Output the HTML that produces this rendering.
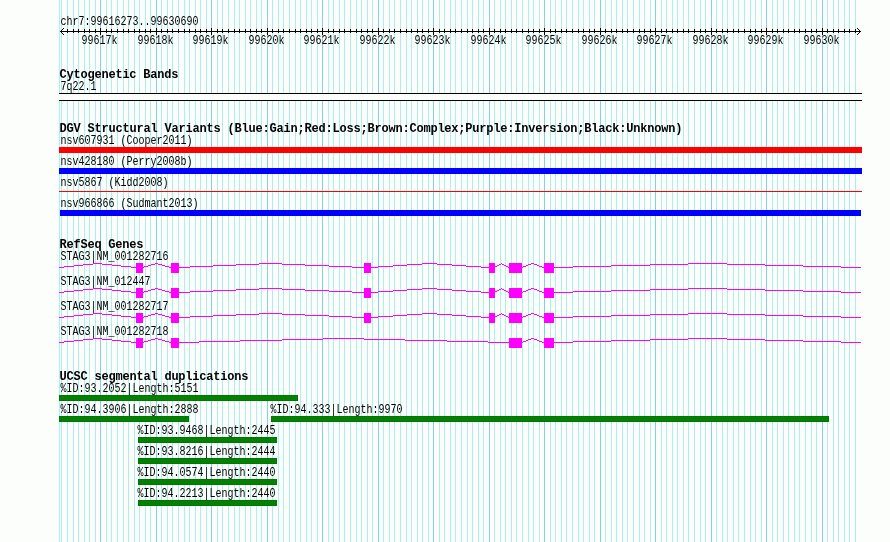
<!DOCTYPE html>
<html><head><meta charset="utf-8"><title>GBrowse</title>
<style>
html,body{margin:0;padding:0;background:#fcfefc;}
svg{display:block;will-change:transform;}
text{fill:#000;white-space:pre;}
.s{font-family:"Liberation Mono",monospace;font-size:10px;}
.b{font-family:"Liberation Mono",monospace;font-size:12px;font-weight:bold;}
</style></head><body>
<svg width="890" height="542" viewBox="0 0 890 542">
<g shape-rendering="crispEdges">
<rect x="0" y="0" width="890" height="542" fill="#fcfefc"/>
<rect x="59" y="0" width="1" height="542" fill="#afeeee"/>
<rect x="61" y="0" width="1" height="542" fill="#afeeee"/>
<rect x="67" y="0" width="1" height="542" fill="#afeeee"/>
<rect x="73" y="0" width="1" height="542" fill="#afeeee"/>
<rect x="78" y="0" width="1" height="542" fill="#afeeee"/>
<rect x="84" y="0" width="1" height="542" fill="#afeeee"/>
<rect x="89" y="0" width="1" height="542" fill="#afeeee"/>
<rect x="95" y="0" width="1" height="542" fill="#afeeee"/>
<rect x="100" y="0" width="1" height="542" fill="#87ceeb"/>
<rect x="106" y="0" width="1" height="542" fill="#afeeee"/>
<rect x="111" y="0" width="1" height="542" fill="#afeeee"/>
<rect x="117" y="0" width="1" height="542" fill="#afeeee"/>
<rect x="123" y="0" width="1" height="542" fill="#afeeee"/>
<rect x="128" y="0" width="1" height="542" fill="#afeeee"/>
<rect x="134" y="0" width="1" height="542" fill="#afeeee"/>
<rect x="139" y="0" width="1" height="542" fill="#afeeee"/>
<rect x="145" y="0" width="1" height="542" fill="#afeeee"/>
<rect x="150" y="0" width="1" height="542" fill="#afeeee"/>
<rect x="156" y="0" width="1" height="542" fill="#87ceeb"/>
<rect x="161" y="0" width="1" height="542" fill="#afeeee"/>
<rect x="167" y="0" width="1" height="542" fill="#afeeee"/>
<rect x="172" y="0" width="1" height="542" fill="#afeeee"/>
<rect x="178" y="0" width="1" height="542" fill="#afeeee"/>
<rect x="184" y="0" width="1" height="542" fill="#afeeee"/>
<rect x="189" y="0" width="1" height="542" fill="#afeeee"/>
<rect x="195" y="0" width="1" height="542" fill="#afeeee"/>
<rect x="200" y="0" width="1" height="542" fill="#afeeee"/>
<rect x="206" y="0" width="1" height="542" fill="#afeeee"/>
<rect x="211" y="0" width="1" height="542" fill="#87ceeb"/>
<rect x="217" y="0" width="1" height="542" fill="#afeeee"/>
<rect x="222" y="0" width="1" height="542" fill="#afeeee"/>
<rect x="228" y="0" width="1" height="542" fill="#afeeee"/>
<rect x="234" y="0" width="1" height="542" fill="#afeeee"/>
<rect x="239" y="0" width="1" height="542" fill="#afeeee"/>
<rect x="245" y="0" width="1" height="542" fill="#afeeee"/>
<rect x="250" y="0" width="1" height="542" fill="#afeeee"/>
<rect x="256" y="0" width="1" height="542" fill="#afeeee"/>
<rect x="261" y="0" width="1" height="542" fill="#afeeee"/>
<rect x="267" y="0" width="1" height="542" fill="#87ceeb"/>
<rect x="272" y="0" width="1" height="542" fill="#afeeee"/>
<rect x="278" y="0" width="1" height="542" fill="#afeeee"/>
<rect x="283" y="0" width="1" height="542" fill="#afeeee"/>
<rect x="289" y="0" width="1" height="542" fill="#afeeee"/>
<rect x="295" y="0" width="1" height="542" fill="#afeeee"/>
<rect x="300" y="0" width="1" height="542" fill="#afeeee"/>
<rect x="306" y="0" width="1" height="542" fill="#afeeee"/>
<rect x="311" y="0" width="1" height="542" fill="#afeeee"/>
<rect x="317" y="0" width="1" height="542" fill="#afeeee"/>
<rect x="322" y="0" width="1" height="542" fill="#87ceeb"/>
<rect x="328" y="0" width="1" height="542" fill="#afeeee"/>
<rect x="333" y="0" width="1" height="542" fill="#afeeee"/>
<rect x="339" y="0" width="1" height="542" fill="#afeeee"/>
<rect x="344" y="0" width="1" height="542" fill="#afeeee"/>
<rect x="350" y="0" width="1" height="542" fill="#afeeee"/>
<rect x="356" y="0" width="1" height="542" fill="#afeeee"/>
<rect x="361" y="0" width="1" height="542" fill="#afeeee"/>
<rect x="367" y="0" width="1" height="542" fill="#afeeee"/>
<rect x="372" y="0" width="1" height="542" fill="#afeeee"/>
<rect x="378" y="0" width="1" height="542" fill="#87ceeb"/>
<rect x="383" y="0" width="1" height="542" fill="#afeeee"/>
<rect x="389" y="0" width="1" height="542" fill="#afeeee"/>
<rect x="394" y="0" width="1" height="542" fill="#afeeee"/>
<rect x="400" y="0" width="1" height="542" fill="#afeeee"/>
<rect x="406" y="0" width="1" height="542" fill="#afeeee"/>
<rect x="411" y="0" width="1" height="542" fill="#afeeee"/>
<rect x="417" y="0" width="1" height="542" fill="#afeeee"/>
<rect x="422" y="0" width="1" height="542" fill="#afeeee"/>
<rect x="428" y="0" width="1" height="542" fill="#afeeee"/>
<rect x="433" y="0" width="1" height="542" fill="#87ceeb"/>
<rect x="439" y="0" width="1" height="542" fill="#afeeee"/>
<rect x="444" y="0" width="1" height="542" fill="#afeeee"/>
<rect x="450" y="0" width="1" height="542" fill="#afeeee"/>
<rect x="455" y="0" width="1" height="542" fill="#afeeee"/>
<rect x="461" y="0" width="1" height="542" fill="#afeeee"/>
<rect x="467" y="0" width="1" height="542" fill="#afeeee"/>
<rect x="472" y="0" width="1" height="542" fill="#afeeee"/>
<rect x="478" y="0" width="1" height="542" fill="#afeeee"/>
<rect x="483" y="0" width="1" height="542" fill="#afeeee"/>
<rect x="489" y="0" width="1" height="542" fill="#87ceeb"/>
<rect x="494" y="0" width="1" height="542" fill="#afeeee"/>
<rect x="500" y="0" width="1" height="542" fill="#afeeee"/>
<rect x="505" y="0" width="1" height="542" fill="#afeeee"/>
<rect x="511" y="0" width="1" height="542" fill="#afeeee"/>
<rect x="516" y="0" width="1" height="542" fill="#afeeee"/>
<rect x="522" y="0" width="1" height="542" fill="#afeeee"/>
<rect x="528" y="0" width="1" height="542" fill="#afeeee"/>
<rect x="533" y="0" width="1" height="542" fill="#afeeee"/>
<rect x="539" y="0" width="1" height="542" fill="#afeeee"/>
<rect x="544" y="0" width="1" height="542" fill="#87ceeb"/>
<rect x="550" y="0" width="1" height="542" fill="#afeeee"/>
<rect x="555" y="0" width="1" height="542" fill="#afeeee"/>
<rect x="561" y="0" width="1" height="542" fill="#afeeee"/>
<rect x="566" y="0" width="1" height="542" fill="#afeeee"/>
<rect x="572" y="0" width="1" height="542" fill="#afeeee"/>
<rect x="578" y="0" width="1" height="542" fill="#afeeee"/>
<rect x="583" y="0" width="1" height="542" fill="#afeeee"/>
<rect x="589" y="0" width="1" height="542" fill="#afeeee"/>
<rect x="594" y="0" width="1" height="542" fill="#afeeee"/>
<rect x="600" y="0" width="1" height="542" fill="#87ceeb"/>
<rect x="605" y="0" width="1" height="542" fill="#afeeee"/>
<rect x="611" y="0" width="1" height="542" fill="#afeeee"/>
<rect x="616" y="0" width="1" height="542" fill="#afeeee"/>
<rect x="622" y="0" width="1" height="542" fill="#afeeee"/>
<rect x="627" y="0" width="1" height="542" fill="#afeeee"/>
<rect x="633" y="0" width="1" height="542" fill="#afeeee"/>
<rect x="639" y="0" width="1" height="542" fill="#afeeee"/>
<rect x="644" y="0" width="1" height="542" fill="#afeeee"/>
<rect x="650" y="0" width="1" height="542" fill="#afeeee"/>
<rect x="655" y="0" width="1" height="542" fill="#87ceeb"/>
<rect x="661" y="0" width="1" height="542" fill="#afeeee"/>
<rect x="666" y="0" width="1" height="542" fill="#afeeee"/>
<rect x="672" y="0" width="1" height="542" fill="#afeeee"/>
<rect x="677" y="0" width="1" height="542" fill="#afeeee"/>
<rect x="683" y="0" width="1" height="542" fill="#afeeee"/>
<rect x="688" y="0" width="1" height="542" fill="#afeeee"/>
<rect x="694" y="0" width="1" height="542" fill="#afeeee"/>
<rect x="700" y="0" width="1" height="542" fill="#afeeee"/>
<rect x="705" y="0" width="1" height="542" fill="#afeeee"/>
<rect x="711" y="0" width="1" height="542" fill="#87ceeb"/>
<rect x="716" y="0" width="1" height="542" fill="#afeeee"/>
<rect x="722" y="0" width="1" height="542" fill="#afeeee"/>
<rect x="727" y="0" width="1" height="542" fill="#afeeee"/>
<rect x="733" y="0" width="1" height="542" fill="#afeeee"/>
<rect x="738" y="0" width="1" height="542" fill="#afeeee"/>
<rect x="744" y="0" width="1" height="542" fill="#afeeee"/>
<rect x="750" y="0" width="1" height="542" fill="#afeeee"/>
<rect x="755" y="0" width="1" height="542" fill="#afeeee"/>
<rect x="761" y="0" width="1" height="542" fill="#afeeee"/>
<rect x="766" y="0" width="1" height="542" fill="#87ceeb"/>
<rect x="772" y="0" width="1" height="542" fill="#afeeee"/>
<rect x="777" y="0" width="1" height="542" fill="#afeeee"/>
<rect x="783" y="0" width="1" height="542" fill="#afeeee"/>
<rect x="788" y="0" width="1" height="542" fill="#afeeee"/>
<rect x="794" y="0" width="1" height="542" fill="#afeeee"/>
<rect x="799" y="0" width="1" height="542" fill="#afeeee"/>
<rect x="805" y="0" width="1" height="542" fill="#afeeee"/>
<rect x="811" y="0" width="1" height="542" fill="#afeeee"/>
<rect x="816" y="0" width="1" height="542" fill="#afeeee"/>
<rect x="822" y="0" width="1" height="542" fill="#87ceeb"/>
<rect x="827" y="0" width="1" height="542" fill="#afeeee"/>
<rect x="833" y="0" width="1" height="542" fill="#afeeee"/>
<rect x="838" y="0" width="1" height="542" fill="#afeeee"/>
<rect x="844" y="0" width="1" height="542" fill="#afeeee"/>
<rect x="849" y="0" width="1" height="542" fill="#afeeee"/>
<rect x="855" y="0" width="1" height="542" fill="#afeeee"/>
<rect x="60" y="31" width="801" height="1" fill="#000"/>
<rect x="67" y="29" width="1" height="4" fill="#000"/>
<rect x="73" y="29" width="1" height="4" fill="#000"/>
<rect x="78" y="29" width="1" height="4" fill="#000"/>
<rect x="84" y="29" width="1" height="4" fill="#000"/>
<rect x="89" y="29" width="1" height="4" fill="#000"/>
<rect x="95" y="29" width="1" height="4" fill="#000"/>
<rect x="100" y="28" width="1" height="7" fill="#000"/>
<rect x="106" y="29" width="1" height="4" fill="#000"/>
<rect x="111" y="29" width="1" height="4" fill="#000"/>
<rect x="117" y="29" width="1" height="4" fill="#000"/>
<rect x="123" y="29" width="1" height="4" fill="#000"/>
<rect x="128" y="29" width="1" height="4" fill="#000"/>
<rect x="134" y="29" width="1" height="4" fill="#000"/>
<rect x="139" y="29" width="1" height="4" fill="#000"/>
<rect x="145" y="29" width="1" height="4" fill="#000"/>
<rect x="150" y="29" width="1" height="4" fill="#000"/>
<rect x="156" y="28" width="1" height="7" fill="#000"/>
<rect x="161" y="29" width="1" height="4" fill="#000"/>
<rect x="167" y="29" width="1" height="4" fill="#000"/>
<rect x="172" y="29" width="1" height="4" fill="#000"/>
<rect x="178" y="29" width="1" height="4" fill="#000"/>
<rect x="184" y="29" width="1" height="4" fill="#000"/>
<rect x="189" y="29" width="1" height="4" fill="#000"/>
<rect x="195" y="29" width="1" height="4" fill="#000"/>
<rect x="200" y="29" width="1" height="4" fill="#000"/>
<rect x="206" y="29" width="1" height="4" fill="#000"/>
<rect x="211" y="28" width="1" height="7" fill="#000"/>
<rect x="217" y="29" width="1" height="4" fill="#000"/>
<rect x="222" y="29" width="1" height="4" fill="#000"/>
<rect x="228" y="29" width="1" height="4" fill="#000"/>
<rect x="234" y="29" width="1" height="4" fill="#000"/>
<rect x="239" y="29" width="1" height="4" fill="#000"/>
<rect x="245" y="29" width="1" height="4" fill="#000"/>
<rect x="250" y="29" width="1" height="4" fill="#000"/>
<rect x="256" y="29" width="1" height="4" fill="#000"/>
<rect x="261" y="29" width="1" height="4" fill="#000"/>
<rect x="267" y="28" width="1" height="7" fill="#000"/>
<rect x="272" y="29" width="1" height="4" fill="#000"/>
<rect x="278" y="29" width="1" height="4" fill="#000"/>
<rect x="283" y="29" width="1" height="4" fill="#000"/>
<rect x="289" y="29" width="1" height="4" fill="#000"/>
<rect x="295" y="29" width="1" height="4" fill="#000"/>
<rect x="300" y="29" width="1" height="4" fill="#000"/>
<rect x="306" y="29" width="1" height="4" fill="#000"/>
<rect x="311" y="29" width="1" height="4" fill="#000"/>
<rect x="317" y="29" width="1" height="4" fill="#000"/>
<rect x="322" y="28" width="1" height="7" fill="#000"/>
<rect x="328" y="29" width="1" height="4" fill="#000"/>
<rect x="333" y="29" width="1" height="4" fill="#000"/>
<rect x="339" y="29" width="1" height="4" fill="#000"/>
<rect x="344" y="29" width="1" height="4" fill="#000"/>
<rect x="350" y="29" width="1" height="4" fill="#000"/>
<rect x="356" y="29" width="1" height="4" fill="#000"/>
<rect x="361" y="29" width="1" height="4" fill="#000"/>
<rect x="367" y="29" width="1" height="4" fill="#000"/>
<rect x="372" y="29" width="1" height="4" fill="#000"/>
<rect x="378" y="28" width="1" height="7" fill="#000"/>
<rect x="383" y="29" width="1" height="4" fill="#000"/>
<rect x="389" y="29" width="1" height="4" fill="#000"/>
<rect x="394" y="29" width="1" height="4" fill="#000"/>
<rect x="400" y="29" width="1" height="4" fill="#000"/>
<rect x="406" y="29" width="1" height="4" fill="#000"/>
<rect x="411" y="29" width="1" height="4" fill="#000"/>
<rect x="417" y="29" width="1" height="4" fill="#000"/>
<rect x="422" y="29" width="1" height="4" fill="#000"/>
<rect x="428" y="29" width="1" height="4" fill="#000"/>
<rect x="433" y="28" width="1" height="7" fill="#000"/>
<rect x="439" y="29" width="1" height="4" fill="#000"/>
<rect x="444" y="29" width="1" height="4" fill="#000"/>
<rect x="450" y="29" width="1" height="4" fill="#000"/>
<rect x="455" y="29" width="1" height="4" fill="#000"/>
<rect x="461" y="29" width="1" height="4" fill="#000"/>
<rect x="467" y="29" width="1" height="4" fill="#000"/>
<rect x="472" y="29" width="1" height="4" fill="#000"/>
<rect x="478" y="29" width="1" height="4" fill="#000"/>
<rect x="483" y="29" width="1" height="4" fill="#000"/>
<rect x="489" y="28" width="1" height="7" fill="#000"/>
<rect x="494" y="29" width="1" height="4" fill="#000"/>
<rect x="500" y="29" width="1" height="4" fill="#000"/>
<rect x="505" y="29" width="1" height="4" fill="#000"/>
<rect x="511" y="29" width="1" height="4" fill="#000"/>
<rect x="516" y="29" width="1" height="4" fill="#000"/>
<rect x="522" y="29" width="1" height="4" fill="#000"/>
<rect x="528" y="29" width="1" height="4" fill="#000"/>
<rect x="533" y="29" width="1" height="4" fill="#000"/>
<rect x="539" y="29" width="1" height="4" fill="#000"/>
<rect x="544" y="28" width="1" height="7" fill="#000"/>
<rect x="550" y="29" width="1" height="4" fill="#000"/>
<rect x="555" y="29" width="1" height="4" fill="#000"/>
<rect x="561" y="29" width="1" height="4" fill="#000"/>
<rect x="566" y="29" width="1" height="4" fill="#000"/>
<rect x="572" y="29" width="1" height="4" fill="#000"/>
<rect x="578" y="29" width="1" height="4" fill="#000"/>
<rect x="583" y="29" width="1" height="4" fill="#000"/>
<rect x="589" y="29" width="1" height="4" fill="#000"/>
<rect x="594" y="29" width="1" height="4" fill="#000"/>
<rect x="600" y="28" width="1" height="7" fill="#000"/>
<rect x="605" y="29" width="1" height="4" fill="#000"/>
<rect x="611" y="29" width="1" height="4" fill="#000"/>
<rect x="616" y="29" width="1" height="4" fill="#000"/>
<rect x="622" y="29" width="1" height="4" fill="#000"/>
<rect x="627" y="29" width="1" height="4" fill="#000"/>
<rect x="633" y="29" width="1" height="4" fill="#000"/>
<rect x="639" y="29" width="1" height="4" fill="#000"/>
<rect x="644" y="29" width="1" height="4" fill="#000"/>
<rect x="650" y="29" width="1" height="4" fill="#000"/>
<rect x="655" y="28" width="1" height="7" fill="#000"/>
<rect x="661" y="29" width="1" height="4" fill="#000"/>
<rect x="666" y="29" width="1" height="4" fill="#000"/>
<rect x="672" y="29" width="1" height="4" fill="#000"/>
<rect x="677" y="29" width="1" height="4" fill="#000"/>
<rect x="683" y="29" width="1" height="4" fill="#000"/>
<rect x="688" y="29" width="1" height="4" fill="#000"/>
<rect x="694" y="29" width="1" height="4" fill="#000"/>
<rect x="700" y="29" width="1" height="4" fill="#000"/>
<rect x="705" y="29" width="1" height="4" fill="#000"/>
<rect x="711" y="28" width="1" height="7" fill="#000"/>
<rect x="716" y="29" width="1" height="4" fill="#000"/>
<rect x="722" y="29" width="1" height="4" fill="#000"/>
<rect x="727" y="29" width="1" height="4" fill="#000"/>
<rect x="733" y="29" width="1" height="4" fill="#000"/>
<rect x="738" y="29" width="1" height="4" fill="#000"/>
<rect x="744" y="29" width="1" height="4" fill="#000"/>
<rect x="750" y="29" width="1" height="4" fill="#000"/>
<rect x="755" y="29" width="1" height="4" fill="#000"/>
<rect x="761" y="29" width="1" height="4" fill="#000"/>
<rect x="766" y="28" width="1" height="7" fill="#000"/>
<rect x="772" y="29" width="1" height="4" fill="#000"/>
<rect x="777" y="29" width="1" height="4" fill="#000"/>
<rect x="783" y="29" width="1" height="4" fill="#000"/>
<rect x="788" y="29" width="1" height="4" fill="#000"/>
<rect x="794" y="29" width="1" height="4" fill="#000"/>
<rect x="799" y="29" width="1" height="4" fill="#000"/>
<rect x="805" y="29" width="1" height="4" fill="#000"/>
<rect x="811" y="29" width="1" height="4" fill="#000"/>
<rect x="816" y="29" width="1" height="4" fill="#000"/>
<rect x="822" y="28" width="1" height="7" fill="#000"/>
<rect x="827" y="29" width="1" height="4" fill="#000"/>
<rect x="833" y="29" width="1" height="4" fill="#000"/>
<rect x="838" y="29" width="1" height="4" fill="#000"/>
<rect x="844" y="29" width="1" height="4" fill="#000"/>
<rect x="849" y="29" width="1" height="4" fill="#000"/>
<rect x="855" y="29" width="1" height="4" fill="#000"/>
<path d="M63 28h1v1h-1zM857 28h1v1h-1zM62 29h1v1h-1zM858 29h1v1h-1zM61 30h1v1h-1zM859 30h1v1h-1zM60 31h1v1h-1zM860 31h1v1h-1zM61 32h1v1h-1zM859 32h1v1h-1zM62 33h1v1h-1zM858 33h1v1h-1zM63 34h1v1h-1zM857 34h1v1h-1z" fill="#000"/>
<rect x="59" y="94" width="803" height="6" fill="#fcfefc"/>
<rect x="59" y="93" width="803" height="1" fill="#000"/>
<rect x="59" y="100" width="803" height="1" fill="#000"/>
<rect x="59" y="147" width="803" height="6" fill="#ff0000"/>
<rect x="59" y="168" width="803" height="6" fill="#0000ff"/>
<rect x="59" y="191" width="803" height="1" fill="#ff0000"/>
<rect x="60" y="210" width="801" height="6" fill="#0000ff"/>
<path d="M93 263h9v1h-9zM155 263h3v1h-3zM259 263h23v1h-23zM422 263h15v1h-15zM501 263h1v1h-1zM531 263h3v1h-3zM688 263h39v1h-39zM83 264h10v1h-10zM102 264h10v1h-10zM151 264h4v1h-4zM158 264h4v1h-4zM236 264h23v1h-23zM282 264h23v1h-23zM407 264h15v1h-15zM437 264h15v1h-15zM499 264h2v1h-2zM502 264h2v1h-2zM528 264h3v1h-3zM534 264h3v1h-3zM650 264h38v1h-38zM727 264h38v1h-38zM74 265h9v1h-9zM112 265h9v1h-9zM148 265h3v1h-3zM162 265h3v1h-3zM213 265h23v1h-23zM305 265h24v1h-24zM393 265h14v1h-14zM452 265h14v1h-14zM497 265h2v1h-2zM504 265h2v1h-2zM526 265h2v1h-2zM537 265h2v1h-2zM611 265h39v1h-39zM765 265h38v1h-38zM64 266h10v1h-10zM121 266h10v1h-10zM144 266h4v1h-4zM165 266h4v1h-4zM190 266h23v1h-23zM329 266h23v1h-23zM378 266h15v1h-15zM466 266h15v1h-15zM495 266h2v1h-2zM506 266h2v1h-2zM523 266h3v1h-3zM539 266h3v1h-3zM573 266h38v1h-38zM803 266h38v1h-38zM59 267h5v1h-5zM131 267h5v1h-5zM142 267h2v1h-2zM169 267h2v1h-2zM178 267h12v1h-12zM352 267h12v1h-12zM370 267h8v1h-8zM481 267h8v1h-8zM494 267h1v1h-1zM508 267h1v1h-1zM521 267h2v1h-2zM542 267h2v1h-2zM553 267h20v1h-20zM841 267h20v1h-20z" fill="#ff00ff"/>
<rect x="136" y="263" width="7" height="10" fill="#ff00ff"/>
<rect x="171" y="263" width="8" height="10" fill="#ff00ff"/>
<rect x="364" y="263" width="7" height="10" fill="#ff00ff"/>
<rect x="489" y="263" width="6" height="10" fill="#ff00ff"/>
<rect x="509" y="263" width="13" height="10" fill="#ff00ff"/>
<rect x="544" y="263" width="10" height="10" fill="#ff00ff"/>
<path d="M93 288h9v1h-9zM155 288h3v1h-3zM259 288h23v1h-23zM422 288h15v1h-15zM501 288h1v1h-1zM531 288h3v1h-3zM688 288h39v1h-39zM83 289h10v1h-10zM102 289h10v1h-10zM151 289h4v1h-4zM158 289h4v1h-4zM236 289h23v1h-23zM282 289h23v1h-23zM407 289h15v1h-15zM437 289h15v1h-15zM499 289h2v1h-2zM502 289h2v1h-2zM528 289h3v1h-3zM534 289h3v1h-3zM650 289h38v1h-38zM727 289h38v1h-38zM74 290h9v1h-9zM112 290h9v1h-9zM148 290h3v1h-3zM162 290h3v1h-3zM213 290h23v1h-23zM305 290h24v1h-24zM393 290h14v1h-14zM452 290h14v1h-14zM497 290h2v1h-2zM504 290h2v1h-2zM526 290h2v1h-2zM537 290h2v1h-2zM611 290h39v1h-39zM765 290h38v1h-38zM64 291h10v1h-10zM121 291h10v1h-10zM144 291h4v1h-4zM165 291h4v1h-4zM190 291h23v1h-23zM329 291h23v1h-23zM378 291h15v1h-15zM466 291h15v1h-15zM495 291h2v1h-2zM506 291h2v1h-2zM523 291h3v1h-3zM539 291h3v1h-3zM573 291h38v1h-38zM803 291h38v1h-38zM59 292h5v1h-5zM131 292h5v1h-5zM142 292h2v1h-2zM169 292h2v1h-2zM178 292h12v1h-12zM352 292h12v1h-12zM370 292h8v1h-8zM481 292h8v1h-8zM494 292h1v1h-1zM508 292h1v1h-1zM521 292h2v1h-2zM542 292h2v1h-2zM553 292h20v1h-20zM841 292h20v1h-20z" fill="#ff00ff"/>
<rect x="136" y="288" width="7" height="10" fill="#ff00ff"/>
<rect x="171" y="288" width="8" height="10" fill="#ff00ff"/>
<rect x="364" y="288" width="7" height="10" fill="#ff00ff"/>
<rect x="489" y="288" width="6" height="10" fill="#ff00ff"/>
<rect x="509" y="288" width="13" height="10" fill="#ff00ff"/>
<rect x="544" y="288" width="10" height="10" fill="#ff00ff"/>
<path d="M93 313h9v1h-9zM155 313h3v1h-3zM259 313h23v1h-23zM422 313h15v1h-15zM501 313h1v1h-1zM531 313h3v1h-3zM688 313h39v1h-39zM83 314h10v1h-10zM102 314h10v1h-10zM151 314h4v1h-4zM158 314h4v1h-4zM236 314h23v1h-23zM282 314h23v1h-23zM407 314h15v1h-15zM437 314h15v1h-15zM499 314h2v1h-2zM502 314h2v1h-2zM528 314h3v1h-3zM534 314h3v1h-3zM650 314h38v1h-38zM727 314h38v1h-38zM74 315h9v1h-9zM112 315h9v1h-9zM148 315h3v1h-3zM162 315h3v1h-3zM213 315h23v1h-23zM305 315h24v1h-24zM393 315h14v1h-14zM452 315h14v1h-14zM497 315h2v1h-2zM504 315h2v1h-2zM526 315h2v1h-2zM537 315h2v1h-2zM611 315h39v1h-39zM765 315h38v1h-38zM64 316h10v1h-10zM121 316h10v1h-10zM144 316h4v1h-4zM165 316h4v1h-4zM190 316h23v1h-23zM329 316h23v1h-23zM378 316h15v1h-15zM466 316h15v1h-15zM495 316h2v1h-2zM506 316h2v1h-2zM523 316h3v1h-3zM539 316h3v1h-3zM573 316h38v1h-38zM803 316h38v1h-38zM59 317h5v1h-5zM131 317h5v1h-5zM142 317h2v1h-2zM169 317h2v1h-2zM178 317h12v1h-12zM352 317h12v1h-12zM370 317h8v1h-8zM481 317h8v1h-8zM494 317h1v1h-1zM508 317h1v1h-1zM521 317h2v1h-2zM542 317h2v1h-2zM553 317h20v1h-20zM841 317h20v1h-20z" fill="#ff00ff"/>
<rect x="136" y="313" width="7" height="10" fill="#ff00ff"/>
<rect x="171" y="313" width="8" height="10" fill="#ff00ff"/>
<rect x="364" y="313" width="7" height="10" fill="#ff00ff"/>
<rect x="489" y="313" width="6" height="10" fill="#ff00ff"/>
<rect x="509" y="313" width="13" height="10" fill="#ff00ff"/>
<rect x="544" y="313" width="10" height="10" fill="#ff00ff"/>
<path d="M93 338h9v1h-9zM155 338h3v1h-3zM323 338h41v1h-41zM531 338h3v1h-3zM688 338h39v1h-39zM83 339h10v1h-10zM102 339h10v1h-10zM151 339h4v1h-4zM158 339h4v1h-4zM282 339h41v1h-41zM364 339h41v1h-41zM528 339h3v1h-3zM534 339h3v1h-3zM650 339h38v1h-38zM727 339h38v1h-38zM74 340h9v1h-9zM112 340h9v1h-9zM148 340h3v1h-3zM162 340h3v1h-3zM240 340h42v1h-42zM405 340h42v1h-42zM526 340h2v1h-2zM537 340h2v1h-2zM611 340h39v1h-39zM765 340h38v1h-38zM64 341h10v1h-10zM121 341h10v1h-10zM144 341h4v1h-4zM165 341h4v1h-4zM199 341h41v1h-41zM447 341h41v1h-41zM523 341h3v1h-3zM539 341h3v1h-3zM573 341h38v1h-38zM803 341h38v1h-38zM59 342h5v1h-5zM131 342h5v1h-5zM142 342h2v1h-2zM169 342h2v1h-2zM178 342h21v1h-21zM488 342h21v1h-21zM521 342h2v1h-2zM542 342h2v1h-2zM553 342h20v1h-20zM841 342h20v1h-20z" fill="#ff00ff"/>
<rect x="136" y="338" width="7" height="10" fill="#ff00ff"/>
<rect x="171" y="338" width="8" height="10" fill="#ff00ff"/>
<rect x="509" y="338" width="13" height="10" fill="#ff00ff"/>
<rect x="544" y="338" width="10" height="10" fill="#ff00ff"/>
<rect x="59" y="395" width="239" height="6" fill="#007800"/>
<rect x="60" y="396" width="237" height="4" fill="#048004"/>
<rect x="59" y="416" width="130" height="6" fill="#007800"/>
<rect x="60" y="417" width="128" height="4" fill="#048004"/>
<rect x="271" y="416" width="558" height="6" fill="#007800"/>
<rect x="272" y="417" width="556" height="4" fill="#048004"/>
<rect x="138" y="437" width="139" height="6" fill="#007800"/>
<rect x="139" y="438" width="137" height="4" fill="#048004"/>
<rect x="138" y="458" width="139" height="6" fill="#007800"/>
<rect x="139" y="459" width="137" height="4" fill="#048004"/>
<rect x="138" y="479" width="139" height="6" fill="#007800"/>
<rect x="139" y="480" width="137" height="4" fill="#048004"/>
<rect x="138" y="500" width="139" height="6" fill="#007800"/>
<rect x="139" y="501" width="137" height="4" fill="#048004"/>
</g>
<g>
<text class="s" transform="translate(60.5 25) scale(1 1.2)" textLength="138" lengthAdjust="spacing">chr7:99616273..99630690</text>
<text class="s" transform="translate(81.5 44) scale(1 1.2)" textLength="36" lengthAdjust="spacing">99617k</text>
<text class="s" transform="translate(137.5 44) scale(1 1.2)" textLength="36" lengthAdjust="spacing">99618k</text>
<text class="s" transform="translate(192.5 44) scale(1 1.2)" textLength="36" lengthAdjust="spacing">99619k</text>
<text class="s" transform="translate(248.5 44) scale(1 1.2)" textLength="36" lengthAdjust="spacing">99620k</text>
<text class="s" transform="translate(303.5 44) scale(1 1.2)" textLength="36" lengthAdjust="spacing">99621k</text>
<text class="s" transform="translate(359.5 44) scale(1 1.2)" textLength="36" lengthAdjust="spacing">99622k</text>
<text class="s" transform="translate(414.5 44) scale(1 1.2)" textLength="36" lengthAdjust="spacing">99623k</text>
<text class="s" transform="translate(470.5 44) scale(1 1.2)" textLength="36" lengthAdjust="spacing">99624k</text>
<text class="s" transform="translate(525.5 44) scale(1 1.2)" textLength="36" lengthAdjust="spacing">99625k</text>
<text class="s" transform="translate(581.5 44) scale(1 1.2)" textLength="36" lengthAdjust="spacing">99626k</text>
<text class="s" transform="translate(636.5 44) scale(1 1.2)" textLength="36" lengthAdjust="spacing">99627k</text>
<text class="s" transform="translate(692.5 44) scale(1 1.2)" textLength="36" lengthAdjust="spacing">99628k</text>
<text class="s" transform="translate(747.5 44) scale(1 1.2)" textLength="36" lengthAdjust="spacing">99629k</text>
<text class="s" transform="translate(803.5 44) scale(1 1.2)" textLength="36" lengthAdjust="spacing">99630k</text>
<text class="b" transform="translate(59.5 78) scale(1 1.0)" textLength="119" lengthAdjust="spacing">Cytogenetic Bands</text>
<text class="s" transform="translate(60.5 90) scale(1 1.2)" textLength="36" lengthAdjust="spacing">7q22.1</text>
<text class="b" transform="translate(59.5 132) scale(1 1.0)" textLength="623" lengthAdjust="spacing">DGV Structural Variants (Blue:Gain;Red:Loss;Brown:Complex;Purple:Inversion;Black:Unknown)</text>
<text class="s" transform="translate(60.5 144) scale(1 1.2)" textLength="132" lengthAdjust="spacing">nsv607931 (Cooper2011)</text>
<text class="s" transform="translate(60.5 165) scale(1 1.2)" textLength="132" lengthAdjust="spacing">nsv428180 (Perry2008b)</text>
<text class="s" transform="translate(60.5 186) scale(1 1.2)" textLength="108" lengthAdjust="spacing">nsv5867 (Kidd2008)</text>
<text class="s" transform="translate(60.5 207) scale(1 1.2)" textLength="138" lengthAdjust="spacing">nsv966866 (Sudmant2013)</text>
<text class="b" transform="translate(59.5 248) scale(1 1.0)" textLength="84" lengthAdjust="spacing">RefSeq Genes</text>
<text class="s" transform="translate(60.5 260) scale(1 1.2)" textLength="108" lengthAdjust="spacing">STAG3|NM_001282716</text>
<text class="s" transform="translate(60.5 285) scale(1 1.2)" textLength="90" lengthAdjust="spacing">STAG3|NM_012447</text>
<text class="s" transform="translate(60.5 310) scale(1 1.2)" textLength="108" lengthAdjust="spacing">STAG3|NM_001282717</text>
<text class="s" transform="translate(60.5 335) scale(1 1.2)" textLength="108" lengthAdjust="spacing">STAG3|NM_001282718</text>
<text class="b" transform="translate(59.5 380) scale(1 1.0)" textLength="189" lengthAdjust="spacing">UCSC segmental duplications</text>
<text class="s" transform="translate(60.5 392) scale(1 1.2)" textLength="138" lengthAdjust="spacing">%ID:93.2052|Length:5151</text>
<text class="s" transform="translate(60.5 413) scale(1 1.2)" textLength="138" lengthAdjust="spacing">%ID:94.3906|Length:2888</text>
<text class="s" transform="translate(270.5 413) scale(1 1.2)" textLength="132" lengthAdjust="spacing">%ID:94.333|Length:9970</text>
<text class="s" transform="translate(137.5 434) scale(1 1.2)" textLength="138" lengthAdjust="spacing">%ID:93.9468|Length:2445</text>
<text class="s" transform="translate(137.5 455) scale(1 1.2)" textLength="138" lengthAdjust="spacing">%ID:93.8216|Length:2444</text>
<text class="s" transform="translate(137.5 476) scale(1 1.2)" textLength="138" lengthAdjust="spacing">%ID:94.0574|Length:2440</text>
<text class="s" transform="translate(137.5 497) scale(1 1.2)" textLength="138" lengthAdjust="spacing">%ID:94.2213|Length:2440</text>
</g>
</svg>
</body></html>
